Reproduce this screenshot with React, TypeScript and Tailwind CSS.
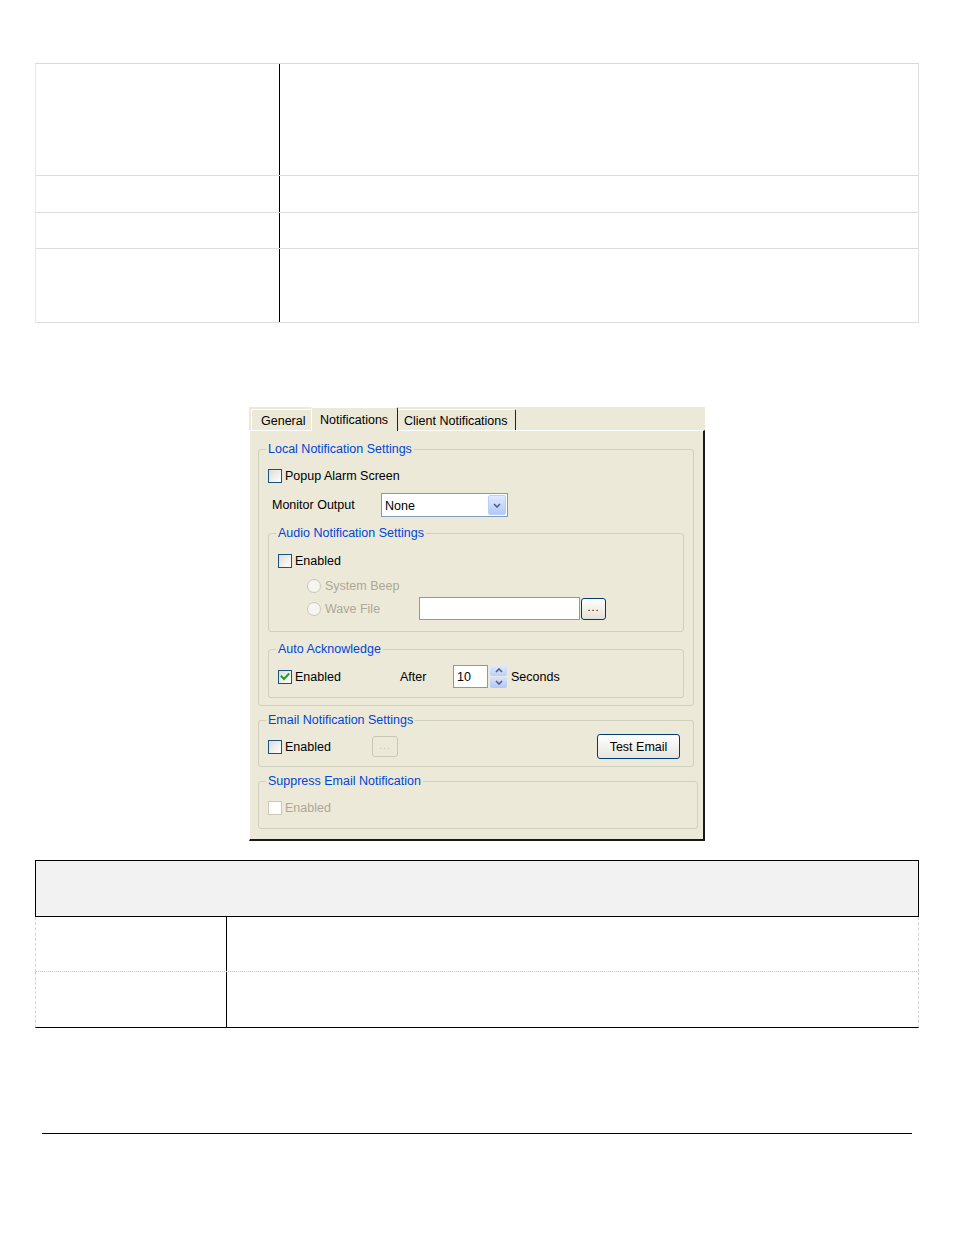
import type { ReactNode } from 'react';

function Check({ checked = false, disabled = false }: { checked?: boolean; disabled?: boolean }) {
  return (
    <span
      className={`relative inline-block h-[14px] w-[14px] shrink-0 border ${
        disabled ? 'border-[#cac8bb] bg-white' : 'border-[#1c5180] bg-linear-to-br from-[#dcdcd7] to-white'
      }`}
    >
      {checked ? (
        <svg viewBox="0 0 12 12" className="absolute inset-0 h-full w-full">
          <path d="M2.5 5.5 L5 8 L9.5 3.2" fill="none" stroke="#21a121" strokeWidth="2" strokeLinecap="square" />
        </svg>
      ) : null}
    </span>
  );
}

function Radio() {
  return <span className="inline-block h-[14px] w-[14px] shrink-0 rounded-full border border-[#cac8bb] bg-[#f6f5f0]" />;
}

function Group({ label, className, children }: { label: string; className: string; children: ReactNode }) {
  return (
    <fieldset className={`rounded-[3px] border border-[#d0d0bf] ${className}`}>
      <legend className="-ml-[2px] px-[2px] leading-[14px] text-[#0046d5]">{label}</legend>
      {children}
    </fieldset>
  );
}

function Chevron({ up = false }: { up?: boolean }) {
  return (
    <svg viewBox="0 0 8 5" className="h-[5px] w-[8px]">
      <path d={up ? 'M1 4 L4 1 L7 4' : 'M1 1 L4 4 L7 1'} fill="none" stroke="#4d6185" strokeWidth="1.6" />
    </svg>
  );
}

function Dialog() {
  return (
    <div className="mx-auto mt-[84px] w-[456px] bg-[#ece9d8] font-['Liberation_Sans',Arial,sans-serif] text-[12.5px] leading-[14px] text-black">
      {/* tab strip */}
      <div className="flex h-[23px] items-end pl-[2px]">
        <div className="flex h-[21px] w-[60px] items-center rounded-tl-[2px] border-t border-l border-white pl-[9px] pt-[2px]">General</div>
        <div className="relative z-10 mb-[-1px] flex h-[24px] w-[87px] items-center rounded-t-[2px] border-t border-l border-r border-t-white border-l-white border-r-[#222] bg-[#ece9d8] pl-[8px]">
          Notifications
        </div>
        <div className="flex h-[21px] w-[118px] items-center rounded-tr-[2px] border-t border-r border-t-white border-r-[#222] pl-[6px] pt-[2px]">
          Client Notifications
        </div>
      </div>

      {/* panel */}
      <div className="border-t border-l border-r-2 border-b-2 border-t-white border-l-white border-r-[#1a1a1a] border-b-[#1a1a1a] pt-[11px] pb-[10px] pl-[8px]">
        <Group label="Local Notification Settings" className="w-[436px] px-[9px] pb-[7px]">
          <div className="mt-[12px] flex h-[16px] items-center">
            <Check />
            <span className="ml-[3px]">Popup Alarm Screen</span>
          </div>
          <div className="mt-[9px] flex h-[24px] items-center">
            <span className="w-[113px] pl-[4px]">Monitor Output</span>
            <div className="flex h-[24px] w-[127px] items-center border border-[#7f9db9] bg-white pl-[3px]">
              <span className="flex-1 pt-[2px]">None</span>
              <span className="mr-[1px] flex h-[20px] w-[18px] items-center justify-center rounded-[2px] border border-[#b9d1fa] bg-linear-to-b from-[#e1eafe] to-[#b4c8f6]">
                <Chevron />
              </span>
            </div>
          </div>

          <Group label="Audio Notification Settings" className="mt-[9px] pl-[9px] pb-[11px]">
            <div className="mt-[13px] flex h-[16px] items-center">
              <Check />
              <span className="ml-[3px]">Enabled</span>
            </div>
            <div className="mt-[9px] flex h-[16px] items-center pl-[29px] text-[#aca899]">
              <Radio />
              <span className="ml-[4px]">System Beep</span>
            </div>
            <div className="mt-[3px] flex h-[23px] items-center pl-[29px]">
              <div className="flex w-[112px] items-center text-[#aca899]">
                <Radio />
                <span className="ml-[4px]">Wave File</span>
              </div>
              <div className="h-[23px] w-[161px] border border-[#7f9db9] bg-white" />
              <div className="ml-[1px] flex h-[22px] w-[25px] items-center justify-center rounded-[3px] border border-[#003c74] bg-linear-to-b from-white to-[#e3e2da] pb-[4px] text-[11px] tracking-[1px]">
                ...
              </div>
            </div>
          </Group>

          <Group label="Auto Acknowledge" className="mt-[10px] pl-[9px] pb-[9px]">
            <div className="mt-[9px] flex h-[23px] items-center">
              <Check checked />
              <span className="ml-[3px] w-[105px]">Enabled</span>
              <span className="w-[53px]">After</span>
              <div className="flex h-[23px] w-[35px] items-center border border-[#7f9db9] bg-white pl-[3px] pt-[1px]">10</div>
              <div className="ml-[2px] flex h-[23px] w-[17px] flex-col gap-[1px]">
                <span className="flex flex-1 items-center justify-center rounded-[2px] bg-linear-to-b from-[#e1eafe] to-[#bccff8]">
                  <Chevron up />
                </span>
                <span className="flex flex-1 items-center justify-center rounded-[2px] bg-linear-to-b from-[#d6e2fd] to-[#b4c8f6]">
                  <Chevron />
                </span>
              </div>
              <span className="ml-[4px]">Seconds</span>
            </div>
          </Group>
        </Group>

        <Group label="Email Notification Settings" className="mt-[7px] w-[436px] pl-[9px] pr-[13px] pb-[7px]">
          <div className="mt-[7px] flex h-[25px] items-center">
            <Check />
            <span className="ml-[3px] w-[87px]">Enabled</span>
            <div className="flex h-[21px] w-[26px] items-center justify-center rounded-[3px] border border-[#c9c7ba] pb-[4px] text-[11px] tracking-[1px] text-[#c9c7ba]">
              ...
            </div>
            <div className="ml-auto flex h-[25px] w-[83px] items-center justify-center rounded-[3px] border border-[#003c74] bg-linear-to-b from-white to-[#e6e5de]">
              Test Email
            </div>
          </div>
        </Group>

        <Group label="Suppress Email Notification" className="mt-[7px] w-[440px] pl-[9px] pb-[12px]">
          <div className="mt-[12px] flex h-[16px] items-center">
            <Check disabled />
            <span className="ml-[3px] text-[#aca899]">Enabled</span>
          </div>
        </Group>
      </div>
    </div>
  );
}

export default function App() {
  return (
    <div className="h-[1235px] w-[954px] overflow-hidden bg-white">
      {/* top table */}
      <div className="ml-[35px] mt-[63px] w-[884px] border-t border-l border-r border-t-[#d9d9d9] border-l-[#e8e8e8] border-r-[#e0e0e0]">
        {[112, 37, 36, 74].map((h, i) => (
          <div key={i} className="flex border-b border-[#dcdcdc]" style={{ height: h }}>
            <div className="w-[243px]" />
            <div className="flex-1 border-l border-black" />
          </div>
        ))}
      </div>

      <Dialog />

      {/* bottom table */}
      <div className="ml-[35px] mt-[19px] w-[884px]">
        <div className="h-[57px] border border-black bg-[#f2f2f2]" />
        <div className="flex h-[55px] border-x border-b border-dashed border-x-[#d4d4d4] border-b-[#c4c4c4] [border-bottom-style:dotted]">
          <div className="w-[190px]" />
          <div className="flex-1 border-l border-solid border-black" />
        </div>
        <div className="flex h-[56px] border-x border-b border-dashed border-x-[#d4d4d4] border-b-black [border-bottom-style:solid]">
          <div className="w-[190px]" />
          <div className="flex-1 border-l border-solid border-black" />
        </div>
      </div>

      <div className="ml-[42px] mt-[105px] w-[870px] border-t border-black" />
    </div>
  );
}
